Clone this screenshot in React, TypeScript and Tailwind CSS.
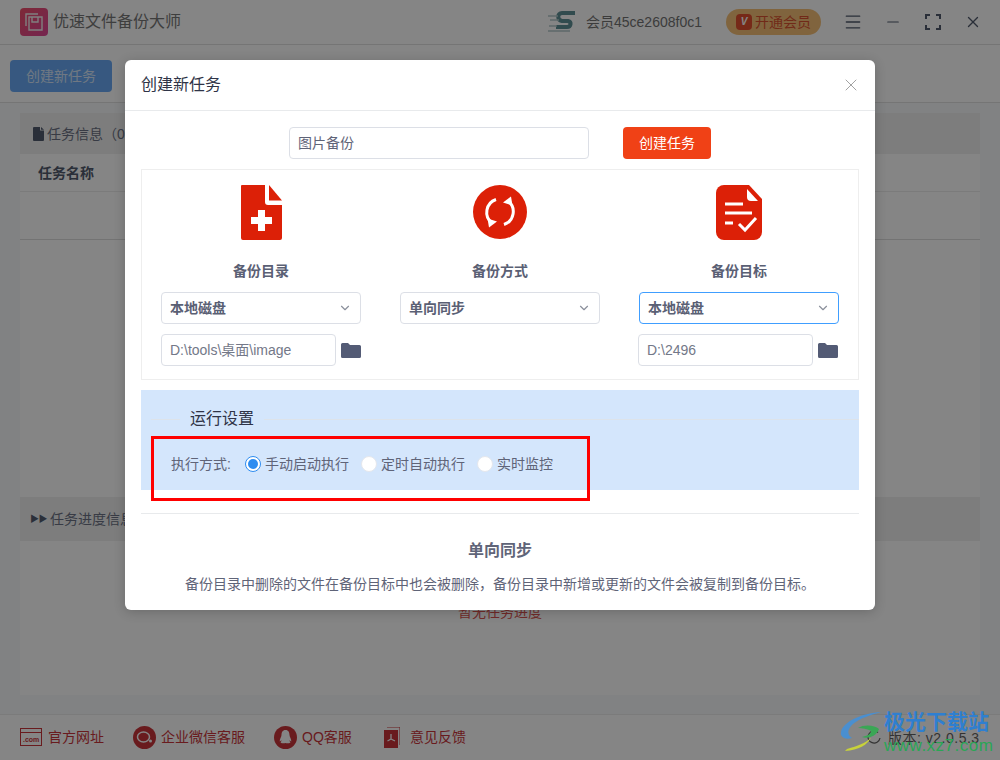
import { FC, ReactNode } from "react";
import { ChevronDown, Menu, Minus, X } from "lucide-react";

const FONT = "font-['Liberation_Sans','Noto_Sans_CJK_SC',sans-serif]";

const Folder: FC = () => (
  <svg width="20" height="15" viewBox="0 0 20 15" className="shrink-0">
    <path d="M0 1.5A1.5 1.5 0 0 1 1.5 0h5.5l2 2h9.5A1.5 1.5 0 0 1 20 3.5v10a1.5 1.5 0 0 1-1.5 1.5h-17A1.5 1.5 0 0 1 0 13.5z" fill="#535b75" />
  </svg>
);

const SelectBox: FC<{ text: string; active?: boolean }> = ({ text, active }) => (
  <div className={`flex h-8 w-[200px] items-center justify-between rounded border pl-2 pr-[8px] text-sm font-bold text-[#5a6074] ${active ? "border-[#409eff]" : "border-[#dcdfe6]"}`}>
    <span>{text}</span>
    <ChevronDown size={14} className="text-[#8b909c]" />
  </div>
);

const PathBox: FC<{ text: string; shift?: boolean }> = ({ text, shift }) => (
  <div className={`mt-2.5 flex w-[200px] items-center justify-between ${shift ? "-ml-px" : ""}`}>
    <div className="flex h-8 w-[175px] items-center rounded border border-[#dcdfe6] px-2 text-sm text-[#737888]">{text}</div>
    <Folder />
  </div>
);

const Radio: FC<{ text: string; checked?: boolean }> = ({ text, checked }) => (
  <div className="mr-3 flex items-center gap-1">
    <span className={`flex h-4 w-4 items-center justify-center rounded-full border bg-white ${checked ? "border-[#2d8cf0]" : "border-[#e4e7ed]"}`}>
      {checked && <span className="h-[10px] w-[10px] rounded-full bg-[#2d8cf0]" />}
    </span>
    <span>{text}</span>
  </div>
);

const FooterLink: FC<{ icon: ReactNode; text: string; className: string }> = ({ icon, text, className }) => (
  <div className={`flex items-center text-sm text-[#c9353a] ${className}`}>
    {icon}
    <span>{text}</span>
  </div>
);

export default function App() {
  return (
    <div className={`relative h-[760px] w-[1000px] overflow-hidden bg-[#f7f9fb] ${FONT}`}>
      {/* page behind the dialog */}
      <div className="flex h-[45px] items-center whitespace-nowrap border-b border-[#e0e0e0] bg-white pl-5">
        <svg width="28" height="28" viewBox="0 0 28 28" className="shrink-0">
          <defs>
            <linearGradient id="lg" x1="0" y1="0" x2="1" y2="1">
              <stop offset="0" stopColor="#f0506a" />
              <stop offset="1" stopColor="#e0489a" />
            </linearGradient>
          </defs>
          <rect width="28" height="28" rx="4" fill="url(#lg)" />
          <path d="M6 18V6h12M9 9h13v13H9z" fill="none" stroke="#f4f4f4" strokeWidth="1.4" />
          <path d="M12 9v5h6V9" fill="none" stroke="#f4f4f4" strokeWidth="1.4" />
        </svg>
        <span className="ml-[5px] text-base text-[#777]">优速文件备份大师</span>
        <svg width="30" height="24" viewBox="0 0 30 24" className="ml-[367px] shrink-0">
          <path d="M27 3H14c-5 0-5 7 0 8h6c4 1 3 6-1 6H8" fill="none" stroke="#5f9096" strokeWidth="4" />
          <path d="M0 6h10M2 10h9M0 21h22M1 16h8" stroke="#b4c8ca" strokeWidth="1.5" />
        </svg>
        <span className="ml-2 text-sm text-[#737373]">会员45ce2608f0c1</span>
        <div className="ml-6 flex h-[26px] w-[95px] shrink-0 items-center justify-center gap-[3px] rounded-[13px] bg-[#f6c078] text-sm text-[#d9522f]">
          <span className="flex h-4 w-4 items-center justify-center rounded-sm bg-[#e2502f] text-[10px] font-bold italic text-white">V</span>
          <span>开通会员</span>
        </div>
        <Menu size={20} strokeWidth={1.6} className="ml-[22px] shrink-0 text-[#515a6e]" />
        <Minus size={18} strokeWidth={1.6} className="ml-[21px] shrink-0 text-[#515a6e]" />
        <svg width="16" height="16" viewBox="0 0 16 16" className="ml-[23px] shrink-0 text-[#515a6e]">
          <path d="M1 5V1h4M11 1h4v4M15 11v4h-4M5 15H1v-4" fill="none" stroke="currentColor" strokeWidth="2" />
        </svg>
        <X size={18} strokeWidth={1.8} className="ml-[23px] shrink-0 text-[#515a6e]" />
      </div>

      <div className="flex h-[58px] items-start border-b border-[#e0e0e0] bg-white pl-2.5 pt-[15px]">
        <div className="flex h-8 w-[102px] items-center justify-center rounded bg-[#6aaaf5] text-sm text-[#d6e7fb]">创建新任务</div>
      </div>

      <div className="mx-5 mt-2.5 h-[582px] bg-white">
        <div className="flex h-[41px] items-center bg-[#f0f0f0] pl-[13px] text-sm text-[#6b7285]">
          <svg width="11" height="14" viewBox="0 0 11 14" className="mr-[3px]">
            <path d="M0 1a1 1 0 0 1 1-1h6v3.500h4V13a1 1 0 0 1-1 1H1a1 1 0 0 1-1-1zM8 0l3 2.700H8z" fill="#515a6e" />
          </svg>
          任务信息（0个）
        </div>
        <div className="flex h-[38px] items-center border-b border-[#ececec] pl-[18px] text-sm font-bold text-[#515a6e]">任务名称</div>
        <div className="h-[48px] border-b border-[#dcdcdc]" />
        <div className="mt-[257px] flex h-11 items-center bg-[#f0f0f0] pl-2.5 text-sm text-[#6b7285]">
          <span className="mr-[3px] text-[9px] tracking-tighter text-[#515a6e]">▶▶</span>
          任务进度信息
        </div>
        <div className="pt-[61px] text-center text-sm text-[#d9534f]">暂无任务进度</div>
      </div>

      <div className="mt-[19px] flex h-[46px] items-center border-t border-[#ececec] bg-white pb-px pl-5">
        <FooterLink
          className="w-[113px]"
          text="官方网址"
          icon={
            <svg width="22" height="18" viewBox="0 0 22 18" className="mr-[6px]">
              <rect x="0.5" y="0.5" width="21" height="17" fill="none" stroke="#c9353a" />
              <path d="M0 4.5h22" stroke="#c9353a" />
              <text x="3" y="14" fontSize="7" fontWeight="bold" fill="#c9353a">.com</text>
            </svg>
          }
        />
        <FooterLink
          className="w-[141px]"
          text="企业微信客服"
          icon={
            <svg width="23" height="23" viewBox="0 0 23 23" className="mr-[5px]">
              <circle cx="11.5" cy="11.5" r="11.5" fill="#c9353a" />
              <ellipse cx="10.5" cy="11" rx="6" ry="5" fill="none" stroke="#fff" strokeWidth="1.5" />
              <circle cx="17.5" cy="15" r="1.5" fill="#fff" />
            </svg>
          }
        />
        <FooterLink
          className="w-[110px]"
          text="QQ客服"
          icon={
            <svg width="23" height="23" viewBox="0 0 23 23" className="mr-[5px]">
              <circle cx="11.5" cy="11.5" r="11.5" fill="#c9353a" />
              <path d="M11.5 4c3 0 4 2.5 4 5 0 2 2 4 1.800 6.500-1-.5-1.300-1-1.800-1.500 0 1 .5 2 1 2.500-1.500 1-3.500 1-5 .5-1.500.5-3.500.5-5-.5.5-.5 1-1.500 1-2.500-.5.5-.8 1-1.800 1.500C5.500 13 7.500 11 7.500 9c0-2.500 1-5 4-5z" fill="#fff" />
            </svg>
          }
        />
        <FooterLink
          text="意见反馈"
          className=""
          icon={
            <svg width="16" height="21" viewBox="0 0 16 21" className="mr-2.5">
              <path d="M3 0h13v18" fill="none" stroke="#c9353a" />
              <rect x="0" y="3" width="14" height="18" fill="#c9353a" />
              <path d="M7 7v5M7 12l-3.500 2M7 12l4 2" stroke="#fff" strokeWidth="1.3" fill="none" />
            </svg>
          }
        />
      </div>

      {/* dim layer */}
      <div className="absolute inset-0 bg-black/[0.48]" />

      {/* dialog */}
      <div className="absolute left-[125px] top-[60px] h-[550px] w-[750px] rounded-md bg-white shadow-[0_2px_12px_rgba(0,0,0,0.2)]">
        <div className="flex h-[51px] items-center justify-between border-b border-[#e8eaec] px-4">
          <span className="text-base text-[#2f3447]">创建新任务</span>
          <X size={20} strokeWidth={1} className="mr-[-2px] text-[#8f8f8f]" />
        </div>

        <div className="flex h-[58px] items-start pl-[164px] pt-4">
          <div className="flex h-8 w-[300px] items-center rounded border border-[#dcdfe6] px-2 text-sm text-[#5f6478]">图片备份</div>
          <div className="ml-[34px] flex h-8 w-[88px] items-center justify-center rounded bg-[#f04116] text-sm text-white">创建任务</div>
        </div>

        <div className="mx-4 flex h-[211px] justify-between border border-[#eeeeee] px-[19px] pt-[15px]">
          <div className="w-[200px]">
            <div className="flex h-[56px] justify-center">
              <svg width="41" height="55" viewBox="0 0 41 55">
                <path d="M1 0h23v17a3 3 0 0 0 3 3h14v33a2 2 0 0 1-2 2H2a2 2 0 0 1-2-2V1a1 1 0 0 1 1-1z" fill="#dc2007" />
                <path d="M28 0l13 15.500H28z" fill="#dc2007" />
                <path d="M17 25h7v7h7v7h-7v7h-7v-7h-7v-7h7z" fill="#fff" />
              </svg>
            </div>
            <div className="mt-5 h-[21px] text-center text-sm font-bold leading-[21px] text-[#5a6074]">备份目录</div>
            <div className="mt-2.5"><SelectBox text="本地磁盘" /></div>
            <PathBox text="D:\tools\桌面\image" />
          </div>

          <div className="w-[200px]">
            <div className="flex h-[56px] justify-center">
              <svg width="54" height="54" viewBox="0 0 54 54">
                <circle cx="27" cy="27" r="27" fill="#dc2007" />
                <path d="M23 14.500A13.500 13.500 0 0 0 19 38" fill="none" stroke="#fff" strokeWidth="3" />
                <path d="M14.500 33.500l9.500 3-8 6z" fill="#fff" />
                <path d="M31 39.500A13.500 13.500 0 0 0 35 16" fill="none" stroke="#fff" strokeWidth="3" />
                <path d="M39.500 20.500l-9.500-3 8-6z" fill="#fff" />
              </svg>
            </div>
            <div className="mt-5 h-[21px] text-center text-sm font-bold leading-[21px] text-[#5a6074]">备份方式</div>
            <div className="mt-2.5"><SelectBox text="单向同步" /></div>
          </div>

          <div className="w-[200px]">
            <div className="flex h-[56px] justify-center">
              <svg width="46" height="55" viewBox="0 0 46 55">
                <path d="M8 0h25l13 14v33a8 8 0 0 1-8 8H8a8 8 0 0 1-8-8V8a8 8 0 0 1 8-8z" fill="#dc2007" />
                <path d="M31 4l11 12h-7a4 4 0 0 1-4-4z" fill="#fff" />
                <path d="M9 19h18M9 28h27M9 38h8" stroke="#fff" strokeWidth="3" fill="none" />
                <path d="M23 39l6 6 11-12" stroke="#fff" strokeWidth="3" fill="none" />
              </svg>
            </div>
            <div className="mt-5 h-[21px] text-center text-sm font-bold leading-[21px] text-[#5a6074]">备份目标</div>
            <div className="mt-2.5"><SelectBox text="本地磁盘" active /></div>
            <PathBox text="D:\2496" shift />
          </div>
        </div>

        <div className="mx-4 mt-2.5 h-[100px] bg-[#d4e6fc] pt-[19px]">
          <div className="flex items-center">
            <span className="ml-2.5 h-px w-[29px] bg-[#dde3ea]" />
            <span className="px-2.5 text-base leading-5 text-[#2f3447]">运行设置</span>
            <span className="h-px flex-1 bg-[#dde3ea]" />
          </div>
          <div className="mt-[25px] flex items-center pl-[30px] text-sm leading-5 text-[#5f6478]">
            <span className="w-[74px]">执行方式:</span>
            <Radio text="手动启动执行" checked />
            <Radio text="定时自动执行" />
            <Radio text="实时监控" />
          </div>
        </div>

        <div className="mx-4 mt-[23px] border-t border-[#e8eaec] pt-[27px] text-center">
          <div className="text-base font-bold leading-5 text-[#5f6478]">单向同步</div>
          <div className="mt-[13px] text-sm leading-5 text-[#5f6478]">备份目录中删除的文件在备份目标中也会被删除，备份目录中新增或更新的文件会被复制到备份目标。</div>
        </div>

        {/* red annotation box */}
        <div className="absolute left-[26px] top-[376px] h-[65px] w-[439px] border-[3px] border-[#ff0000]" />
      </div>

      {/* version + watermark */}
      <svg width="14" height="14" viewBox="0 0 14 14" className="absolute left-[867px] top-[730px]">
        <path d="M11 2.500A6 6 0 1 0 13 8" fill="none" stroke="#333" strokeWidth="1.2" />
      </svg>
      <div className="absolute left-[888px] top-[728px] whitespace-nowrap text-sm tracking-[0.5px] text-[#333]">版本: v2.0.5.3</div>
      <svg width="44" height="40" viewBox="0 0 44 40" className="absolute left-[840px] top-[711px]">
        <path d="M41 1C24 2 3 10 1 21c-1 5 4 8 11 6C7 24 7 18 13 13 20 7 31 4 41 1z" fill="#4a8fd0" />
        <path d="M18 17c6-4 17-3 21 1-3 8-12 10-17 8 5-1 9-3 9-6-3-2-9-3-13-3z" fill="#3aa655" />
        <path d="M5 40c14-1 22-6 26-13-6 5-13 8-24 11z" fill="#c8d23a" />
      </svg>
      <div className="absolute left-[884px] top-[706px] whitespace-nowrap text-[21px] font-bold leading-8 text-[#2f7fd0]">极光下载站</div>
      <div className="absolute left-[884px] top-[736px] whitespace-nowrap text-[17px] leading-5 tracking-[0.5px] text-[#2aa655]">www.xz7.com</div>
    </div>
  );
}
